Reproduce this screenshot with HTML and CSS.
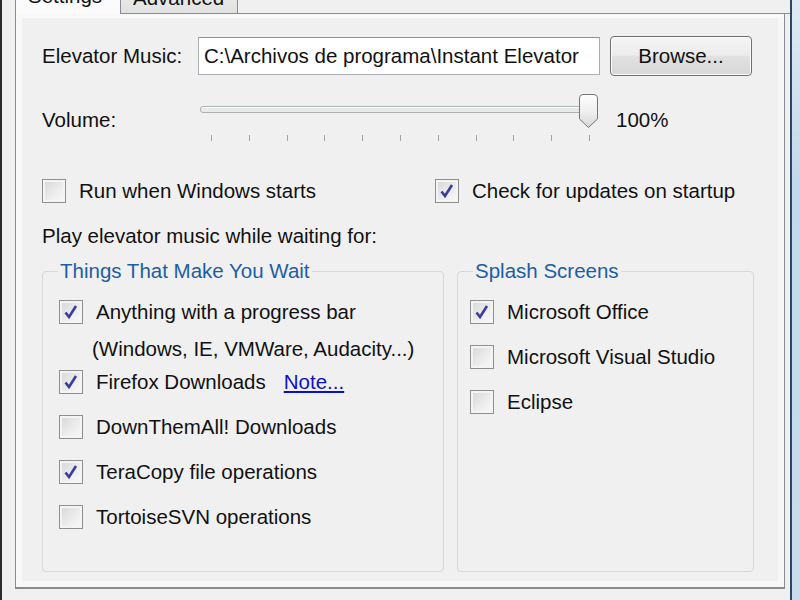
FILE: index.html
```html
<!DOCTYPE html>
<html lang="en">
<head>
    <meta charset="UTF-8">
    <title>Instant Elevator Music - Settings</title>
    <link rel="stylesheet" href="styles.css">
</head>
<body>
    <div class="window">
        <div class="client">
            <div class="tabs">
                <div class="tab tab-active">Settings</div>
                <div class="tab">Advanced</div>
                <div class="tab-fill"></div>
            </div>

            <div class="panel">
                <!-- Music file -->
                <div class="row row-file">
                    <span class="label">Elevator Music:</span>
                    <div class="textbox">C:\Archivos de programa\Instant Elevator</div>
                    <button class="btn">Browse...</button>
                </div>

                <!-- Volume -->
                <div class="row row-volume">
                    <span class="label label-volume">Volume:</span>
                    <div class="slider">
                        <div class="track"></div>
                        <svg class="thumb" width="21" height="35" viewBox="0 0 21 35">
                            <defs>
                                <linearGradient id="thumbFill" x1="0" y1="0" x2="0" y2="1">
                                    <stop offset="0" stop-color="#fdfdfd"/>
                                    <stop offset="0.55" stop-color="#eeeeee"/>
                                    <stop offset="1" stop-color="#d6d6d6"/>
                                </linearGradient>
                            </defs>
                            <path d="M1.5 4 Q1.5 0.5 5 0.5 L16 0.5 Q19.5 0.5 19.5 4 L19.5 25 L10.5 33.5 L1.5 25 Z" fill="url(#thumbFill)" stroke="#767676"/>
                        </svg>
                        <div class="ticks">
                            <i></i><i></i><i></i><i></i><i></i><i></i><i></i><i></i><i></i><i></i><i></i>
                        </div>
                    </div>
                    <span class="value">100%</span>
                </div>

                <!-- General options -->
                <div class="row-checks">
                    <div class="check"><span class="box"></span>Run when Windows starts</div>
                    <div class="check"><span class="box checked"><svg width="22" height="22" viewBox="0 0 22 22"><path d="M5.5 11.5 L9 16 L16 5" /></svg></span>Check for updates on startup</div>
                </div>

                <p class="intro">Play elevator music while waiting for:</p>

                <div class="groups">
                    <fieldset class="group">
                        <legend>Things That Make You Wait</legend>
                        <div class="group-body">
                            <div class="check"><span class="box checked"><svg width="22" height="22" viewBox="0 0 22 22"><path d="M5.5 11.5 L9 16 L16 5" /></svg></span>Anything with a progress bar</div>
                            <div class="sub">(Windows, IE, VMWare, Audacity...)</div>
                            <div class="check"><span class="box checked"><svg width="22" height="22" viewBox="0 0 22 22"><path d="M5.5 11.5 L9 16 L16 5" /></svg></span>Firefox Downloads <a class="link" href="#">Note...</a></div>
                            <div class="check"><span class="box"></span>DownThemAll! Downloads</div>
                            <div class="check"><span class="box checked"><svg width="22" height="22" viewBox="0 0 22 22"><path d="M5.5 11.5 L9 16 L16 5" /></svg></span>TeraCopy file operations</div>
                            <div class="check"><span class="box"></span>TortoiseSVN operations</div>
                        </div>
                    </fieldset>

                    <fieldset class="group group-right">
                        <legend>Splash Screens</legend>
                        <div class="group-body">
                            <div class="check"><span class="box checked"><svg width="22" height="22" viewBox="0 0 22 22"><path d="M5.5 11.5 L9 16 L16 5" /></svg></span>Microsoft Office</div>
                            <div class="check"><span class="box"></span>Microsoft Visual Studio</div>
                            <div class="check"><span class="box"></span>Eclipse</div>
                        </div>
                    </fieldset>
                </div>
            </div>
        </div>
        <div class="edge"></div>
    </div>
</body>
</html>
```

FILE: styles.css
```css
* {
    margin: 0;
    padding: 0;
    box-sizing: border-box;
}

body {
    font-family: 'Liberation Sans', Arial, sans-serif;
    font-size: 20.5px;
    line-height: 24px;
    color: #111;
    background: #f0f0f0;
    width: 800px;
    height: 600px;
    overflow: hidden;
}

.window {
    display: flex;
    height: 600px;
    border-left: 2px solid #2c2c2c;
}

.client {
    width: 788px;
    padding-left: 13px;
}

.edge {
    flex: 1;
    border-left: 2px solid #2a4763;
    background: linear-gradient(180deg, #dfeaf5 0%, #c3d8ec 30%, #c9dcee 100%);
}

/* Tabs (top is cut off by the screenshot) */
.tabs {
    display: flex;
    height: 14px;
    align-items: flex-end;
}

.tab {
    height: 34px;
    padding: 5px 12px 0;
    border: 1px solid #898c95;
    border-left: none;
    background: linear-gradient(180deg, #f2f2f2 0%, #e1e1e1 100%);
    white-space: nowrap;
    width: 117px;
}

.tab-active {
    width: 106px;
    border-left: 1px solid #898c95;
    border-bottom: none;
    background: #fbfbfb;
    height: 36px;
}

.tab-fill {
    flex: 1;
    border-bottom: 1px solid #898c95;
    margin-right: -1px;
}

/* Tab page */
.panel {
    width: 770px;
    height: 575px;
    border: 1px solid #898c95;
    border-top: none;
    border-bottom: 2px solid #8a8a8a;
    background: #f0f0f0;
    box-shadow: inset 6px 4px 0 #f9f9f9, inset -6px -6px 0 #f7f7f7;
    padding: 22px 0 0 26px;
}

.row {
    display: flex;
}

.label {
    width: 156px;
    flex-shrink: 0;
}

.row-file {
    height: 40px;
    align-items: center;
}

.textbox {
    width: 402px;
    height: 38px;
    border: 1px solid #abadb3;
    border-top-color: #8e9096;
    background: #fff;
    padding: 6px 5px;
    white-space: nowrap;
    overflow: hidden;
}

.btn {
    margin-left: 10px;
    width: 142px;
    height: 40px;
    font: inherit;
    color: #111;
    border: 1px solid #707070;
    border-radius: 4px;
    background: linear-gradient(180deg, #f4f4f4 0%, #ececec 48%, #e0e0e0 52%, #d8d8d8 100%);
    box-shadow: inset 0 0 0 1px #fbfbfb;
}

.row-volume {
    margin-top: 18px;
    height: 48px;
}

.label-volume,
.value {
    margin-top: 14px;
}

.slider {
    position: relative;
    width: 402px;
    height: 48px;
}

.track {
    margin: 12px 0 0 2px;
    width: 398px;
    height: 7px;
    border: 1px solid #b0b0b0;
    border-radius: 3px;
    background: #e7eaea;
    box-shadow: inset 0 1px 0 #fff;
}

.thumb {
    position: absolute;
    left: 380px;
    top: 0;
}

.ticks {
    display: flex;
    justify-content: space-between;
    margin: 22px 0 0 13px;
    width: 379px;
}

.ticks i {
    width: 1px;
    height: 6px;
    background: #a3a3a3;
}

.value {
    margin-left: 16px;
}

/* Checkboxes */
.check {
    display: flex;
    align-items: center;
    height: 24px;
    white-space: nowrap;
}

.box {
    width: 24px;
    height: 24px;
    flex-shrink: 0;
    margin-right: 13px;
    border: 1px solid #8e8f8f;
    background: linear-gradient(135deg, #d6d6d6 0%, #ececec 55%, #fafafa 100%);
    box-shadow: inset 0 0 0 2px #f4f4f4;
}

.box svg {
    display: block;
}

.box path {
    fill: none;
    stroke: #3a3d9c;
    stroke-width: 2.6;
}

.row-checks {
    display: grid;
    grid-template-columns: 393px 1fr;
    margin-top: 37px;
}

.intro {
    margin-top: 21px;
}

/* Group boxes */
.groups {
    display: grid;
    grid-template-columns: 402px 297px;
    gap: 13px;
    margin-top: 11px;
}

.group {
    height: 313px;
    border: 1px solid #d5d9dc;
    border-radius: 4px;
    padding: 0 0 0 16px;
}

.group legend {
    color: #1d5da5;
    padding: 0 2px;
    margin-left: -1px;
}

.group-body {
    padding-top: 17px;
    display: flex;
    flex-direction: column;
    gap: 21px;
}

.sub {
    margin: -8px 0 -12px 33px;
}

.link {
    color: #0a10c8;
    margin-left: 18px;
}

.group-right {
    padding-left: 12px;
}

.group-right legend {
    margin-left: 3px;
}
```
